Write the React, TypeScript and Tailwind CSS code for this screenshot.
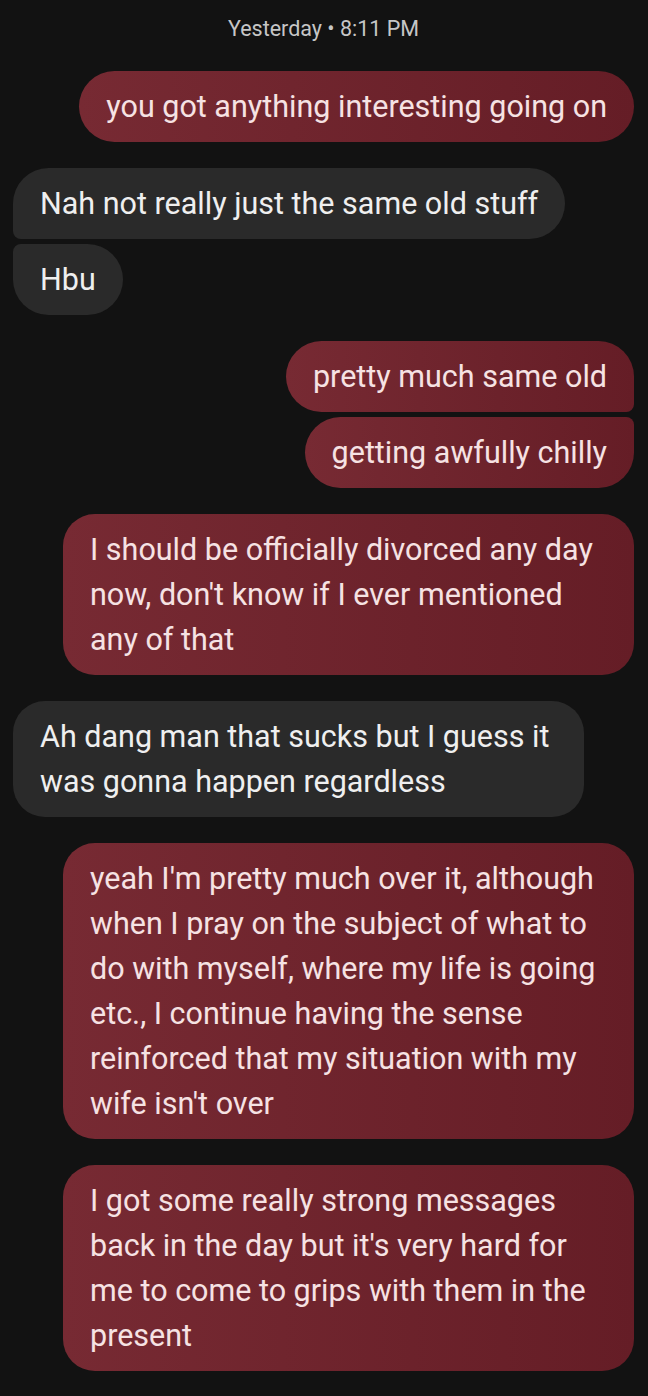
import React from "react";

type Msg = { text: string; sent: boolean; corners: string; groupStart: boolean };

const msgs: Msg[] = [
  { text: "you got anything interesting going on", sent: true, corners: "rounded-[36px]", groupStart: true },
  { text: "Nah not really just the same old stuff", sent: false, corners: "rounded-[36px] rounded-bl-[8px]", groupStart: true },
  { text: "Hbu", sent: false, corners: "rounded-[36px] rounded-tl-[8px]", groupStart: false },
  { text: "pretty much same old", sent: true, corners: "rounded-[36px] rounded-br-[8px]", groupStart: true },
  { text: "getting awfully chilly", sent: true, corners: "rounded-[36px] rounded-tr-[8px]", groupStart: false },
  {
    text: "I should be officially divorced any day now, don't know if I ever mentioned any of that",
    sent: true,
    corners: "rounded-[32px]",
    groupStart: true,
  },
  {
    text: "Ah dang man that sucks but I guess it was gonna happen regardless",
    sent: false,
    corners: "rounded-[32px]",
    groupStart: true,
  },
  {
    text: "yeah I'm pretty much over it, although when I pray on the subject of what to do with myself, where my life is going etc., I continue having the sense reinforced that my situation with my wife isn't over",
    sent: true,
    corners: "rounded-[32px]",
    groupStart: true,
  },
  {
    text: "I got some really strong messages back in the day but it's very hard for me to come to grips with them in the present",
    sent: true,
    corners: "rounded-[32px]",
    groupStart: true,
  },
];

export default function App() {
  return (
    <div
      className="w-[648px] h-[1396px] bg-[#121212] overflow-hidden pt-[14px] pl-[13px] pr-[14px]"
      style={{ fontFamily: "Roboto, 'Noto Sans', sans-serif" }}
    >
      <div className="text-center text-[21.5px] leading-[30px] text-[#c6c6c6] mb-[27px]">
        Yesterday • 8:11 PM
      </div>
      <div className="flex flex-col">
        {msgs.map((m, i) => (
          <div
            key={i}
            className={`flex ${m.sent ? "justify-end" : "justify-start"} ${
              i === 0 ? "" : m.groupStart ? "mt-[26px]" : "mt-[5px]"
            }`}
          >
            <div
              className={`max-w-[571px] px-[27px] py-[13px] text-[30.5px] leading-[45px] ${m.corners} ${
                m.sent
                  ? "bg-gradient-to-r from-[#772a33] to-[#651d26] text-[#f6e2e3]"
                  : "bg-[#2a2a2a] text-[#efefef]"
              }`}
            >
              {m.text}
            </div>
          </div>
        ))}
      </div>
    </div>
  );
}
